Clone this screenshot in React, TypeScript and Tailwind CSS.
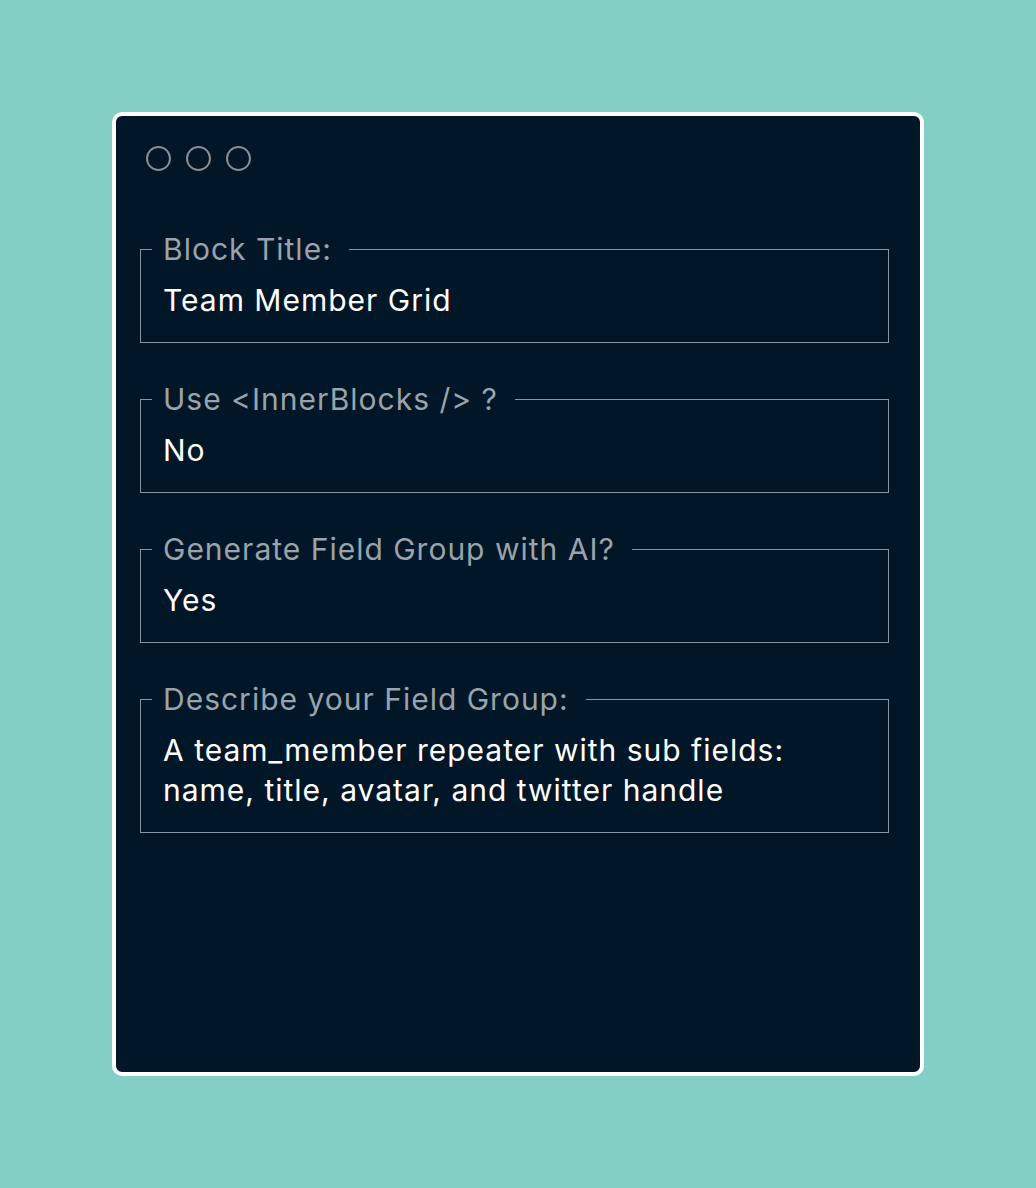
const fields = [
  { label: "Block Title:", value: "Team Member Grid" },
  { label: "Use <InnerBlocks /> ?", value: "No" },
  { label: "Generate Field Group with AI?", value: "Yes" },
  {
    label: "Describe your Field Group:",
    value: "A team_member repeater with sub fields: name, title, avatar, and twitter handle",
  },
]

export default function App() {
  return (
    <div className="min-h-[1188px] w-full bg-[#84cfc5] flex justify-center pt-[112px] font-['Inter',sans-serif]">
      <div className="w-[812px] h-[964px] rounded-[10px] border-4 border-white bg-[#011627] overflow-hidden">
        <div className="flex gap-[15px] pl-[30px] pt-[30px]">
          <span className="w-[25px] h-[25px] rounded-full border-2 border-[#8a8d90]" />
          <span className="w-[25px] h-[25px] rounded-full border-2 border-[#8a8d90]" />
          <span className="w-[25px] h-[25px] rounded-full border-2 border-[#8a8d90]" />
        </div>

        <div className="flex flex-col gap-[36px] mt-[58px] ml-[24px] w-[749px]">
          {fields.map((field) => (
            <fieldset
              key={field.label}
              className="border border-[#8696a0] px-[22px] pb-[22px] pt-[11px] text-[30px] leading-[40px] tracking-[1px]"
            >
              <legend className="px-[11px] ml-[-11px] pr-[17px] text-[#9aa3ab]">{field.label}</legend>
              <p className="text-white">{field.value}</p>
            </fieldset>
          ))}
        </div>
      </div>
    </div>
  )
}
